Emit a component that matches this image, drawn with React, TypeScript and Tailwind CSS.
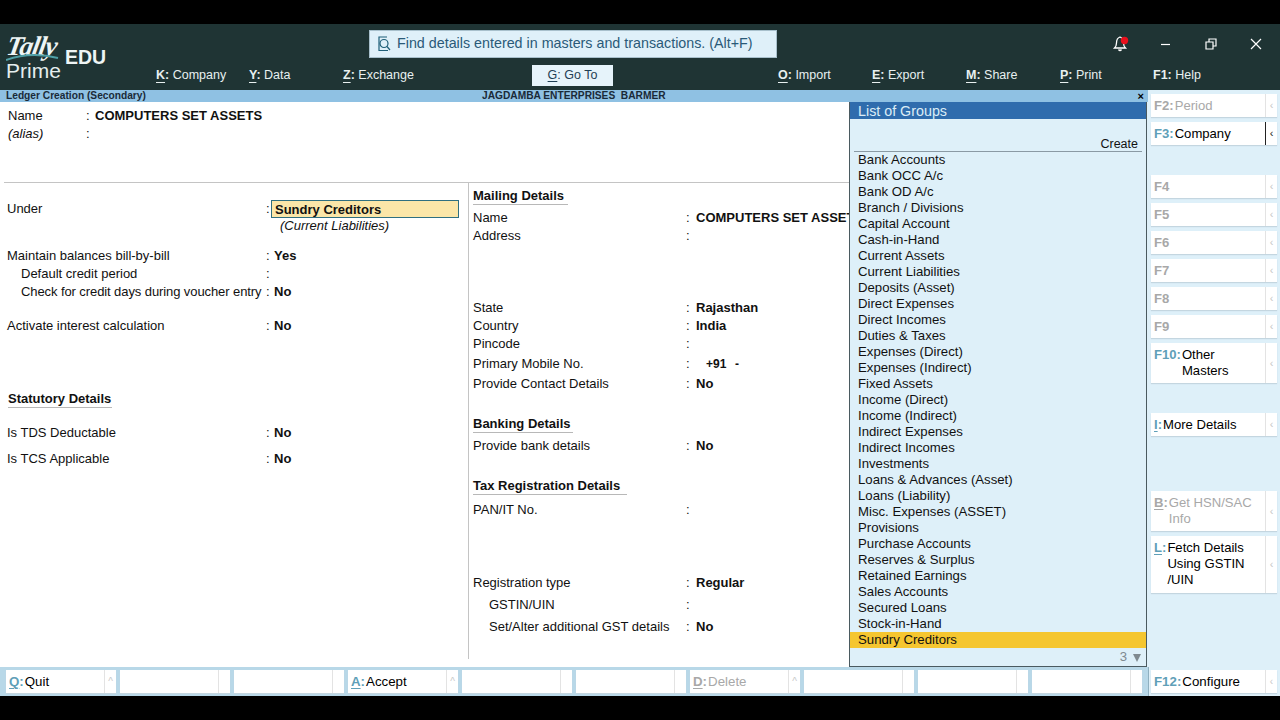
const font = "[font-family:'Liberation_Sans',Arial,sans-serif]";

const topLeft = [
  { k: "K", t: "Company", w: "w-[93px]" },
  { k: "Y", t: "Data", w: "w-[94px]" },
  { k: "Z", t: "Exchange", w: "w-[189px]" },
];
const topRight = [
  { k: "O", t: "Import", w: "w-[94px]" },
  { k: "E", t: "Export", w: "w-[94px]" },
  { k: "M", t: "Share", w: "w-[94px]" },
  { k: "P", t: "Print", w: "w-[93px]" },
  { k: "F1", t: "Help", w: "w-[60px]", plain: true },
];

const groups = [
  "Bank Accounts", "Bank OCC A/c", "Bank OD A/c", "Branch / Divisions", "Capital Account", "Cash-in-Hand",
  "Current Assets", "Current Liabilities", "Deposits (Asset)", "Direct Expenses", "Direct Incomes", "Duties & Taxes",
  "Expenses (Direct)", "Expenses (Indirect)", "Fixed Assets", "Income (Direct)", "Income (Indirect)", "Indirect Expenses",
  "Indirect Incomes", "Investments", "Loans & Advances (Asset)", "Loans (Liability)", "Misc. Expenses (ASSET)", "Provisions",
  "Purchase Accounts", "Reserves & Surplus", "Retained Earnings", "Sales Accounts", "Secured Loans", "Stock-in-Hand",
];

function Row({ label, value, cls, labelW, colonW, indent }: { label: string; value?: string; cls: string; labelW: string; colonW: string; indent?: string }) {
  return (
    <div className={`flex items-center h-[18px] ${cls}`}>
      <div className={`${labelW} ${indent || ""} shrink-0 whitespace-nowrap`}>{label}</div>
      <div className={`${colonW} shrink-0`}>:</div>
      {value && <div className="font-bold whitespace-nowrap">{value}</div>}
    </div>
  );
}

function Heading({ text, cls, line }: { text: string; cls: string; line: string }) {
  return (
    <div className={`h-[18px] font-bold text-[13px] whitespace-nowrap ${cls}`}>
      <div className={`${line} border-b border-[#b8b8b8] h-[18px] leading-[18px]`}>{text}</div>
    </div>
  );
}

function SideButton({ k, t, dim, selected, under, cls, h }: { k: string; t?: string; dim?: boolean; selected?: boolean; under?: boolean; cls: string; h: string }) {
  return (
    <div className={`flex bg-white ${h} ${cls} shadow-[0_1px_1px_#c4d6e0]`}>
      <div className={`flex-1 flex pl-[3px] pt-[4px] leading-[16px] min-w-0 ${dim ? "text-[#a8a8a8]" : "text-black"}`}>
        <span className={`font-bold shrink-0 ${dim ? "text-[#a8a8a8]" : "text-[#5f9fb8]"}`}>
          <span className={under ? "underline underline-offset-2" : ""}>{k}</span>
          {t ? ":" : ""}
        </span>
        {t && <span className="pl-[1px] whitespace-pre-line">{t}</span>}
      </div>
      <div className={`w-[12px] shrink-0 flex items-center justify-center text-[11px] border-l ${selected ? "border-[#222] text-[#222]" : "border-[#e3e3e3] text-[#c8c8c8]"}`}>‹</div>
    </div>
  );
}

function BottomButton({ k, t, dim, plain, w }: { k?: string; t?: string; dim?: boolean; plain?: boolean; w: string }) {
  return (
    <div className={`${w} h-[23px] bg-white flex shrink-0 shadow-[0_1px_1px_#c4d6e0]`}>
      <div className={`flex-1 pl-[3px] leading-[23px] whitespace-nowrap ${dim ? "text-[#a8a8a8]" : "text-black"}`}>
        {k && (
          <>
            <span className={`font-bold ${plain ? "" : "underline underline-offset-2"} ${dim ? "text-[#a8a8a8]" : "text-[#5f9fb8]"}`}>{k}</span>
            <span className={`font-bold ${dim ? "text-[#a8a8a8]" : "text-[#5f9fb8]"}`}>:</span>
            <span className="pl-[1px]">{t}</span>
          </>
        )}
      </div>
      <div className="w-[12px] shrink-0 border-l border-[#e3e3e3] text-[#c8c8c8] text-[10px] flex items-center justify-center">{k && !plain ? "^" : plain ? "‹" : ""}</div>
    </div>
  );
}

export default function App() {
  return (
    <div className={`w-[1280px] h-[720px] overflow-hidden bg-black flex flex-col text-[13px] text-[#111] ${font}`}>
      <div className="h-[24px] shrink-0" />

      {/* Top bar */}
      <div className="h-[66px] shrink-0 bg-[#1f3434] flex text-white">
        <div className="w-[156px] shrink-0 flex pl-[6px] pt-[10px]">
          <div className="w-[59px] relative">
            <div className="absolute left-[1px] -top-[3px] text-[27px] leading-[30px] italic font-bold tracking-[-1px] text-[#eef5f5] -skew-x-[10deg] [font-family:'Liberation_Serif',serif]">Tally</div>
            <svg width="54" height="12" viewBox="0 0 54 12" className="absolute left-0 top-[18px]">
              <path d="M0 8 Q25 -1 52 6" stroke="#4f9fa6" strokeWidth="2" fill="none" />
            </svg>
            <div className="absolute left-0 top-[22px] text-[21px] leading-[30px] text-[#e4eeee]">Prime</div>
          </div>
          <div className="font-bold text-[19.5px] leading-[22px] text-[#eef5f5] mt-[12px]">EDU</div>
        </div>
        <div className="flex-1 flex flex-col min-w-0">
          <div className="h-[41px] flex pt-[6px]">
            <div className="ml-[213px] w-[408px] h-[28px] bg-[#dff0f9] border border-[#a8c0cc] flex items-center pl-[6px] text-[14.3px] text-[#2a5a78]">
              <svg width="17" height="18" viewBox="0 0 17 18" fill="none" stroke="#1f5f78" strokeWidth="1.2" className="mr-[4px] shrink-0">
                <path d="M11 2 H3 V15.5 H12" />
                <circle cx="8" cy="8.5" r="4" />
                <path d="M11 11.5 L14 15" />
              </svg>
              <span className="whitespace-nowrap">Find details entered in masters and transactions. (Alt+F)</span>
            </div>
            <div className="ml-auto flex items-center h-[28px] text-white">
              <svg width="20" height="20" viewBox="0 0 20 20" className="mr-[24px]">
                <path d="M9 3 C6 4 5.5 6 5.5 9 C5.5 11 5 12.5 3.5 14 H14.5 C13 12.5 12.5 11 12.5 9 C12.5 6 12 4 9 3 Z M7.5 15.5 Q9 17.5 10.5 15.5" fill="none" stroke="#fff" strokeWidth="1.3" />
                <circle cx="13.5" cy="6.5" r="3.7" fill="#e8101c" />
              </svg>
              <svg width="46" height="16" viewBox="0 0 46 16" stroke="#fff" fill="none">
                <path d="M6 8.5 H15" strokeWidth="1.2" />
              </svg>
              <svg width="40" height="16" viewBox="0 0 40 16" stroke="#fff" fill="none" strokeWidth="1.2">
                <path d="M5 6 H12 V13 H5 Z M8 6 V3 H15 V10 H12" />
              </svg>
              <svg width="39" height="16" viewBox="0 0 39 16" stroke="#fff" fill="none" strokeWidth="1.2">
                <path d="M10 3 L20 13 M20 3 L10 13" />
              </svg>
            </div>
          </div>
          <div className="h-[25px] flex text-[12.5px] text-[#e8f0f0]">
            {topLeft.map((m) => (
              <div key={m.k} className={`${m.w} leading-[21px] whitespace-nowrap`}>
                <span className="font-bold underline underline-offset-[3px]">{m.k}</span><span className="font-bold">:</span> {m.t}
              </div>
            ))}
            <div className="w-[81px] h-[21px] bg-[#e6f3fa] text-[#1f3f55] text-center leading-[21px]">
              <span className="underline underline-offset-2">G</span>: Go To
            </div>
            <div className="w-[165px]" />
            {topRight.map((m) => (
              <div key={m.k} className={`${m.w} leading-[21px] whitespace-nowrap`}>
                <span className={`font-bold ${m.plain ? "" : "underline underline-offset-[3px]"}`}>{m.k}</span><span className="font-bold">:</span> {m.t}
              </div>
            ))}
          </div>
        </div>
      </div>

      {/* Middle */}
      <div className="h-[577px] shrink-0 flex">
        <div className="w-[1148px] shrink-0 flex flex-col">
          <div className="h-[12px] shrink-0 bg-[#8fc1e3] flex items-center pl-[6px] pr-[4px] text-[10.2px] font-bold text-[#1a2a38] relative">
            <span>Ledger Creation (Secondary)</span>
            <span className="absolute left-[482px] whitespace-pre">JAGDAMBA ENTERPRISES  BARMER</span>
            <span className="ml-auto text-[11px] leading-[12px] text-black">×</span>
          </div>
          <div className="flex-1 flex min-h-0 bg-[#def0f9]">
            {/* Form */}
            <div className="w-[849px] shrink-0 overflow-hidden pt-[5px] bg-white">
              <div className="h-[76px] border-b border-[#c4c4c4] ml-[4px]">
                <div className="flex items-center h-[18px] pl-[4px]">
                  <div className="w-[78px]">Name</div>
                  <div className="w-[9px]">:</div>
                  <div className="font-bold">COMPUTERS SET ASSETS</div>
                </div>
                <div className="flex items-center h-[18px] pl-[4px] italic">
                  <div className="w-[78px]">(alias)</div>
                  <div className="w-[9px] not-italic">:</div>
                </div>
              </div>
              <div className="flex h-[476px]">
                <div className="w-[469px] shrink-0 border-r border-[#c4c4c4] pl-[7px]">
                  <div className="flex items-center h-[18px] mt-[17px]">
                    <div className="w-[259px]">Under</div>
                    <div className="w-[5px]">:</div>
                    <div className="w-[188px] h-[18px] -mt-[1px] bg-[#fbe6a8] border border-[#2f6f80] pl-[3px] font-bold leading-[17px]">Sundry Creditors</div>
                  </div>
                  <div className="ml-[273px] h-[16px] italic leading-[16px]">(Current Liabilities)</div>
                  <Row label="Maintain balances bill-by-bill" value="Yes" cls="mt-[13px]" labelW="w-[259px]" colonW="w-[8px]" />
                  <Row label="Default credit period" cls="" labelW="w-[259px]" colonW="w-[8px]" indent="pl-[14px]" />
                  <Row label="Check for credit days during voucher entry" value="No" cls="" labelW="w-[259px] tracking-[-0.09px]" colonW="w-[8px]" indent="pl-[14px]" />
                  <Row label="Activate interest calculation" value="No" cls="mt-[16px]" labelW="w-[259px]" colonW="w-[8px]" />
                  <Heading text="Statutory Details" cls="mt-[55px] pl-[1px]" line="w-[104px]" />
                  <Row label="Is TDS Deductable" value="No" cls="mt-[16px]" labelW="w-[259px]" colonW="w-[8px]" />
                  <Row label="Is TCS Applicable" value="No" cls="mt-[8px]" labelW="w-[259px]" colonW="w-[8px]" />
                </div>
                <div className="flex-1 min-w-0 pl-[4px] overflow-hidden">
                  <Heading text="Mailing Details" cls="mt-[4px]" line="w-[95px]" />
                  <Row label="Name" value="COMPUTERS SET ASSETS" cls="mt-[4px]" labelW="w-[213px]" colonW="w-[10px]" />
                  <Row label="Address" cls="" labelW="w-[213px]" colonW="w-[10px]" />
                  <Row label="State" value="Rajasthan" cls="mt-[54px]" labelW="w-[213px]" colonW="w-[10px]" />
                  <Row label="Country" value="India" cls="" labelW="w-[213px]" colonW="w-[10px]" />
                  <Row label="Pincode" cls="" labelW="w-[213px]" colonW="w-[10px]" />
                  <div className="flex items-center h-[18px] mt-[2px]">
                    <div className="w-[213px] shrink-0">Primary Mobile No.</div>
                    <div className="w-[20px] shrink-0">:</div>
                    <div className="font-bold text-[12px] w-[29px]">+91</div>
                    <div className="font-bold text-[12px]">-</div>
                  </div>
                  <Row label="Provide Contact Details" value="No" cls="mt-[2px]" labelW="w-[213px]" colonW="w-[10px]" />
                  <Heading text="Banking Details" cls="mt-[22px]" line="w-[100px]" />
                  <Row label="Provide bank details" value="No" cls="mt-[4px]" labelW="w-[213px]" colonW="w-[10px]" />
                  <Heading text="Tax Registration Details" cls="mt-[22px]" line="w-[154px]" />
                  <Row label="PAN/IT No." cls="mt-[6px]" labelW="w-[213px]" colonW="w-[10px]" />
                  <Row label="Registration type" value="Regular" cls="mt-[55px]" labelW="w-[213px]" colonW="w-[10px]" />
                  <Row label="GSTIN/UIN" cls="mt-[4px]" labelW="w-[213px]" colonW="w-[10px]" indent="pl-[16px]" />
                  <Row label="Set/Alter additional GST details" value="No" cls="mt-[4px]" labelW="w-[213px]" colonW="w-[10px]" indent="pl-[16px]" />
                </div>
              </div>
            </div>
            {/* List of Groups */}
            <div className="w-[298px] shrink-0 h-[565px] bg-[#def0f9] border-l border-r border-b border-[#4a5a60] flex flex-col text-[13.2px]">
              <div className="h-[17px] shrink-0 bg-[#2f6cad] text-[#dcecf6] text-[14.3px] leading-[18px] pl-[8px]">List of Groups</div>
              <div className="mx-[4px] h-[17px] mt-[16px] shrink-0 border-b border-[#8a9aa4] text-right text-[12.5px] pr-[4px] leading-[18px]">Create</div>
              <div>
                {groups.map((g) => (
                  <div key={g} className="h-[16px] leading-[16px] pl-[8px] whitespace-nowrap">{g}</div>
                ))}
                <div className="h-[16px] leading-[16px] pl-[8px] bg-[#f5c630]">Sundry Creditors</div>
              </div>
              <div className="mt-auto h-[18px] shrink-0 flex items-center justify-end pr-[4px] text-[#808a90]">
                3
                <svg width="10" height="9" viewBox="0 0 10 9" className="ml-[5px]"><path d="M1 1 H9 L5 9 Z" fill="#808a90" /></svg>
              </div>
            </div>
          </div>
        </div>
        {/* Right button column */}
        <div className="flex-1 bg-[#def0f9] pt-[4px] pl-[3px] pr-[3px] flex flex-col text-[13.1px]">
          <SideButton k="F2" t="Period" dim cls="" h="h-[23px]" />
          <SideButton k="F3" t="Company" selected cls="mt-[5px]" h="h-[23px]" />
          <SideButton k="F4" dim cls="mt-[30px]" h="h-[23px]" />
          <SideButton k="F5" dim cls="mt-[5px]" h="h-[23px]" />
          <SideButton k="F6" dim cls="mt-[5px]" h="h-[23px]" />
          <SideButton k="F7" dim cls="mt-[5px]" h="h-[23px]" />
          <SideButton k="F8" dim cls="mt-[5px]" h="h-[23px]" />
          <SideButton k="F9" dim cls="mt-[5px]" h="h-[23px]" />
          <SideButton k="F10" t={"Other\nMasters"} cls="mt-[5px]" h="h-[40px]" />
          <SideButton k="I" t="More Details" under cls="mt-[30px]" h="h-[23px]" />
          <SideButton k="B" t={"Get HSN/SAC\nInfo"} dim under cls="mt-[55px]" h="h-[40px]" />
          <SideButton k="L" t={"Fetch Details\nUsing GSTIN\n/UIN"} under cls="mt-[5px]" h="h-[57px]" />
        </div>
      </div>

      {/* Bottom bar */}
      <div className="h-[29px] shrink-0 bg-[#b8d8e8] flex items-center pl-[6px]">
        <div className="w-[1142px] shrink-0 flex gap-[4px] text-[13.3px]">
          <BottomButton k="Q" t="Quit" w="w-[110px]" />
          <BottomButton w="w-[110px]" />
          <BottomButton w="w-[110px]" />
          <BottomButton k="A" t="Accept" w="w-[110px]" />
          <BottomButton w="w-[110px]" />
          <BottomButton w="w-[110px]" />
          <BottomButton k="D" t="Delete" dim w="w-[110px]" />
          <BottomButton w="w-[110px]" />
          <BottomButton w="w-[110px]" />
          <BottomButton w="w-[110px]" />
        </div>
        <div className="flex-1 h-[29px] bg-[#def0f9] pt-[3px] pl-[2px] border-l border-[#8fb0c0] text-[13.3px]">
          <BottomButton k="F12" t="Configure" plain w="w-[126px]" />
        </div>
      </div>
      <div className="flex-1" />
    </div>
  );
}
